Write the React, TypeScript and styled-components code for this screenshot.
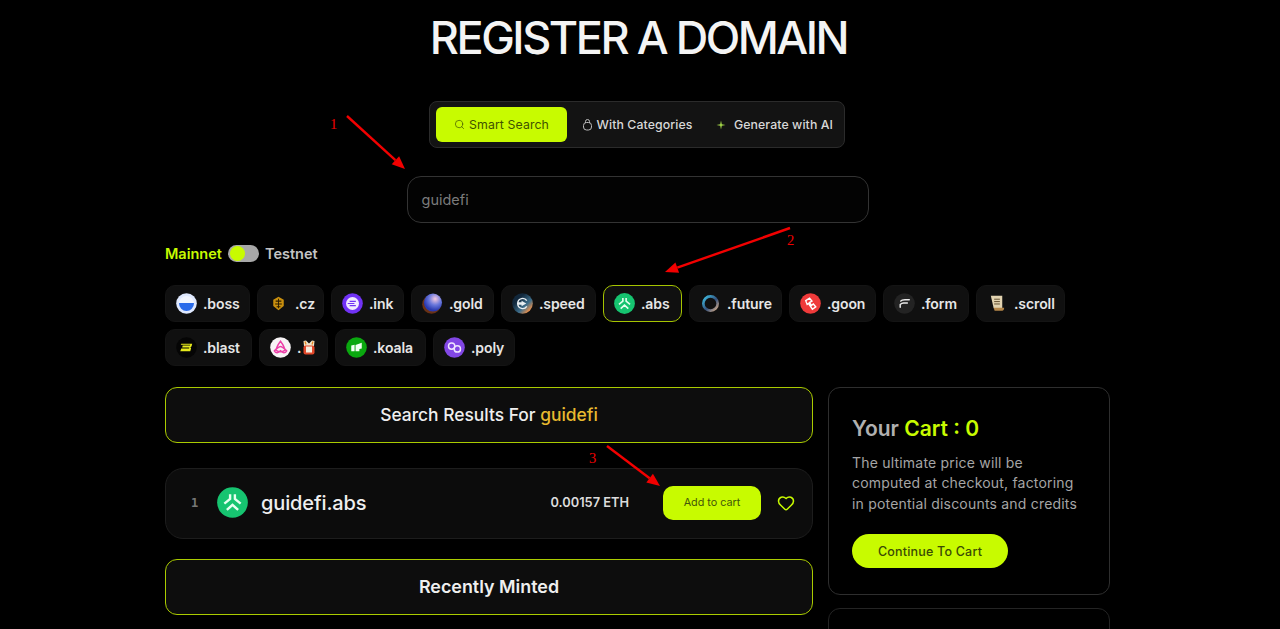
import React from "react";
import styled, { createGlobalStyle } from "styled-components";
import { Search, Heart } from "lucide-react";

const lime = "#c8fb00";
const font = `"Inter", "Noto Sans", "Liberation Sans", sans-serif`;

const Global = createGlobalStyle`
  html, body { margin: 0; padding: 0; background: #000; overflow: hidden; height: 629px; }
  body { font-family: ${font}; color: #eee; }
  * { box-sizing: border-box; }
`;

const Viewport = styled.div`
  position: relative;
  height: 629px;
  overflow: hidden;
  background: #000;
  padding-left: 165px;
`;
const Column = styled.main`
  width: 945px;
  display: flex;
  flex-direction: column;
  align-items: center;
`;
const Title = styled.h1`
  margin: 15px 0 40px 2px;
  font-size: 45px;
  line-height: 46px;
  font-weight: 500;
  letter-spacing: -2.45px;
  color: #f4f4f4;
  white-space: nowrap;
`;
const TabBar = styled.div`
  width: 416px;
  height: 47px;
  margin-right: 1px;
  display: flex;
  align-items: center;
  padding: 0 6px;
  background: #131313;
  border: 1px solid #2b2b2b;
  border-radius: 8px;
`;
const Tab = styled.div<{ $active?: boolean; $w: number }>`
  width: ${(p) => p.$w}px;
  height: 35px;
  flex: none;
  display: flex;
  align-items: center;
  justify-content: center;
  gap: 4px;
  font-size: 12.3px;
  font-weight: ${(p) => (p.$active ? 400 : 500)};
  letter-spacing: 0.1px;
  white-space: nowrap;
  border-radius: 6px;
  color: ${(p) => (p.$active ? "#3f5200" : "#d8d8d8")};
  background: ${(p) => (p.$active ? lime : "transparent")};
`;
const SearchBox = styled.div`
  width: 462px;
  height: 47px;
  margin-top: 28px;
  display: flex;
  align-items: center;
  padding-left: 14px;
  background: #030303;
  border: 1px solid #333;
  border-radius: 14px;
  font-size: 14.5px;
  color: #7b7b7b;
`;
const NetRow = styled.div`
  align-self: flex-start;
  height: 20px;
  margin-top: 21px;
  padding-bottom: 1px;
  display: flex;
  align-items: center;
  gap: 6px;
  font-size: 14.5px;
  font-weight: 600;
`;
const NetLabel = styled.span<{ $on?: boolean }>`
  color: ${(p) => (p.$on ? lime : "#c4c4c4")};
`;
const Toggle = styled.span`
  width: 31px;
  height: 17px;
  border-radius: 9px;
  background: #a8a8a8;
  display: flex;
  align-items: center;
  padding-left: 2px;
  &::before {
    content: "";
    width: 15px;
    height: 15px;
    border-radius: 50%;
    background: ${lime};
  }
`;
const ChipWrap = styled.div`
  align-self: stretch;
  margin-top: 21px;
  display: flex;
  flex-direction: column;
  gap: 7px;
`;
const ChipRow = styled.div`
  display: flex;
  gap: 7px;
`;
const Chip = styled.div<{ $w: number; $selected?: boolean }>`
  width: ${(p) => p.$w}px;
  height: 37px;
  flex: none;
  display: flex;
  align-items: center;
  gap: 6px;
  padding: 0 0 1px 10px;
  background: #101010;
  border: 1px solid ${(p) => (p.$selected ? "#a5c400" : "#141414")};
  border-radius: 10px;
  font-size: 14px;
  font-weight: 600;
  letter-spacing: -0.1px;
  color: #e6e6e6;
  white-space: nowrap;
`;
const Content = styled.div`
  align-self: stretch;
  margin-top: 21px;
  display: grid;
  grid-template-columns: 648px 282px;
  column-gap: 15px;
  align-items: start;
`;
const Left = styled.div`
  display: flex;
  flex-direction: column;
`;
const Right = styled.div`
  display: flex;
  flex-direction: column;
  gap: 13px;
`;
const Banner = styled.div<{ $top?: number; $bold?: boolean }>`
  height: 56px;
  margin-top: ${(p) => p.$top ?? 0}px;
  display: flex;
  align-items: center;
  justify-content: center;
  padding-bottom: 1px;
  background: #0d0d0d;
  border: 1px solid #aacb00;
  border-radius: 12px;
  font-size: ${(p) => (p.$bold ? 17.9 : 17.4)}px;
  font-weight: ${(p) => (p.$bold ? 600 : 500)};
  color: #efefef;
  white-space: pre;
`;
const Gold = styled.span`
  color: #e7b92f;
`;
const ResultCard = styled.div`
  height: 71px;
  margin-top: 25px;
  display: flex;
  align-items: center;
  padding: 0 17px 2px 25px;
  background: #0c0c0c;
  border: 1px solid #1d1d1d;
  border-radius: 18px;
`;
const Rank = styled.span`
  width: 26px;
  font-family: "DejaVu Sans Mono", monospace;
  font-size: 12px;
  font-weight: 700;
  color: #777;
`;
const DomainName = styled.span`
  margin-left: 13px;
  flex: 1;
  font-size: 20px;
  font-weight: 500;
  letter-spacing: -0.12px;
  color: #efefef;
`;
const Price = styled.span`
  font-size: 12.8px;
  font-weight: 600;
  color: #dcdcdc;
`;
const AddBtn = styled.button`
  width: 98px;
  height: 34px;
  margin-left: 34px;
  border: 0;
  border-radius: 10px;
  background: ${lime};
  font-family: ${font};
  font-size: 10.8px;
  color: #43560a;
`;
const Fav = styled.span`
  margin-left: 16px;
  display: flex;
  color: ${lime};
`;
const CartCard = styled.aside`
  height: 208px;
  padding: 27px 23px 0;
  background: #000;
  border: 1px solid #2e2e2e;
  border-radius: 12px;
`;
const CartTitle = styled.h2`
  margin: 0;
  font-size: 21px;
  line-height: 27px;
  font-weight: 600;
  color: #b0b0b0;
`;
const Lime = styled.span`
  color: ${lime};
`;
const CartText = styled.p`
  margin: 11px 0 0;
  font-size: 14px;
  line-height: 20.4px;
  letter-spacing: 0.2px;
  color: #a5a5a5;
  white-space: nowrap;
`;
const ContinueBtn = styled.button`
  width: 156px;
  height: 34px;
  margin-top: 20px;
  border: 0;
  border-radius: 17px;
  background: ${lime};
  font-family: ${font};
  font-size: 12.5px;
  font-weight: 500;
  letter-spacing: 0.2px;
  color: #3a4a05;
`;
const NextCard = styled.div`
  height: 80px;
  border: 1px solid #242424;
  border-radius: 12px;
`;
const Overlay = styled.svg`
  position: absolute;
  inset: 0;
  width: 1280px;
  height: 629px;
  pointer-events: none;
`;
const Mark = styled.span<{ $x: number; $y: number }>`
  position: absolute;
  left: ${(p) => p.$x}px;
  top: ${(p) => p.$y}px;
  font-family: "Liberation Serif", serif;
  font-size: 14.5px;
  line-height: 15px;
  color: #f00000;
`;
const IconBox = styled.svg`
  width: 21px;
  height: 21px;
  flex: none;
`;

const I = ({ children }: { children: React.ReactNode }) => (
  <IconBox viewBox="0 0 22 22">{children}</IconBox>
);

const Boss = () => (
  <I>
    <defs>
      <linearGradient id="bossg" x1="0" y1="0" x2="0" y2="1">
        <stop offset="0.48" stopColor="#f2f6ff" />
        <stop offset="0.5" stopColor="#2a6bea" />
      </linearGradient>
    </defs>
    <circle cx="11" cy="11" r="10.8" fill="#dfe9ff" />
    <circle cx="11" cy="11" r="7.8" fill="url(#bossg)" />
  </I>
);
const Cz = () => (
  <I>
    <path d="M11 4l5.500 3v6.500L11 18l-5.500-4.500V7z" fill="#c98f0e" />
    <path d="M8 8.500h6M7.500 11.500h7M9 14.500h4" stroke="#2a1c00" strokeWidth="1.100" />
    <path d="M11 6v10" stroke="#2a1c00" strokeWidth="1" />
  </I>
);
const Ink = () => (
  <I>
    <circle cx="11" cy="11" r="10.800" fill="#7132f5" />
    <circle cx="11" cy="11" r="6.800" fill="#f1eaff" />
    <path d="M8 8.800h6.500M6 11h7M8 13.200h6.500" stroke="#7132f5" strokeWidth="1.300" />
  </I>
);
const GoldI = () => (
  <I>
    <defs>
      <radialGradient id="goldg" cx="0.62" cy="0.3" r="0.75">
        <stop offset="0" stopColor="#f5c9e0" />
        <stop offset="0.45" stopColor="#6a78dc" />
        <stop offset="0.85" stopColor="#2a3ab0" />
      </radialGradient>
    </defs>
    <circle cx="10" cy="12" r="9.800" fill="#6a3216" />
    <circle cx="11.500" cy="10" r="9.500" fill="url(#goldg)" />
  </I>
);
const SpeedI = () => (
  <I>
    <defs>
      <linearGradient id="speedg" x1="0" y1="0" x2="1" y2="1">
        <stop offset="0.3" stopColor="#12283c" />
        <stop offset="0.62" stopColor="#3d6d8a" />
        <stop offset="0.85" stopColor="#f0914a" />
      </linearGradient>
    </defs>
    <circle cx="11" cy="11" r="10.800" fill="url(#speedg)" />
    <path d="M15.500 8A5.200 5.200 0 0 0 6 10.500h5M15.500 14A5.200 5.200 0 0 1 6 11.500h5" stroke="#e8eef2" strokeWidth="1.500" fill="none" />
    <path d="M10 8l5 3-5 3z" fill="#e8eef2" />
  </I>
);
const AbsI = ({ size = 21 }: { size?: number }) => (
  <svg width={size} height={size} viewBox="0 0 22 22" style={{ flex: "none" }}>
    <circle cx="11" cy="11" r="10.900" fill="#16c470" />
    <path
      d="M9.300 5.200v3.300L5.200 11.800M12.700 5.200v3.300l4.100 3.300M7 16.300l4-3.600 4 3.600"
      stroke="#e6fff0"
      strokeWidth="1.700"
      fill="none"
    />
  </svg>
);
const Future = () => (
  <I>
    <defs>
      <linearGradient id="futg" x1="0" y1="0" x2="1" y2="1">
        <stop offset="0" stopColor="#3fc3e8" />
        <stop offset="0.55" stopColor="#32507c" />
        <stop offset="1" stopColor="#e0b38a" />
      </linearGradient>
    </defs>
    <circle cx="11" cy="11" r="7.500" fill="none" stroke="url(#futg)" strokeWidth="2.800" />
  </I>
);
const Goon = () => (
  <I>
    <circle cx="11" cy="11" r="10.800" fill="#ef3a3a" />
    <path d="M6 8l4-2.500 2.500 3L10 10l2 3 2-1.500 2.500 3-3.500 2.500L9 11 7.500 12z" fill="none" stroke="#fff" strokeWidth="1.500" />
  </I>
);
const FormI = () => (
  <I>
    <circle cx="11" cy="11" r="10.800" fill="#232323" />
    <path d="M7 8.500c1-1.500 3-1.500 4.500-1.500H16M6.500 12c1-1 2-1.500 3.500-1.500h4M6.500 12v3" stroke="#ececec" strokeWidth="1.500" fill="none" strokeLinecap="round" />
  </I>
);
const Scroll = () => (
  <I>
    <path d="M4 3h12v13H7z" fill="#e2d3b0" />
    <path d="M7.500 6.500h6M7.500 9h6M7.500 11.500h6" stroke="#5c4a2c" strokeWidth="1" />
    <path d="M7 15.500h11c0 2-1 3-2 3H8z" fill="#b5874a" />
  </I>
);
const Blast = () => (
  <I>
    <circle cx="11" cy="11" r="10.800" fill="#050505" />
    <path
      d="M5.500 7H17l-.8 3-1.200 1 .8.800-.9 3.200H4.500l1-3h8.200l.3-1H6.500l.5-2h7.600l.3-1H5z"
      fill="#e6ea1c"
    />
  </I>
);
const Tri = () => (
  <I>
    <circle cx="11" cy="11" r="10.800" fill="#f7f3f5" />
    <path d="M11 4.500c-3 4-4.500 7-4.500 9.500 3 2 6 2 9 0 0-2.500-1.500-5.500-4.500-9.500zM4.500 14.500c2.500-3 6-4.500 6.500-4.500s4 1.500 6.500 4.500c-1.500 2.500-4 2.800-6.500 0-2.500 2.800-5 2.500-6.500 0z" fill="none" stroke="#ec3fa8" strokeWidth="1.500" />
  </I>
);
const Drum = () => (
  <svg width="12" height="15" viewBox="0 0 12 15" style={{ flex: "none", marginLeft: -4 }}>
    <path d="M0.500 1L3 0.500 6 3.500 9 0.500 11.500 1 11 6H1z" fill="#f0e4cc" />
    <path d="M2 1.500l1 3M10 1.500l-1 3" stroke="#e8861e" strokeWidth="1.300" />
    <rect x="0.500" y="5.500" width="11" height="9" rx="2" fill="#e2482a" />
    <rect x="3" y="6.500" width="6" height="6" fill="#f6efe0" />
  </svg>
);
const Koala = () => (
  <I>
    <circle cx="11" cy="11" r="10.800" fill="#0aa80f" />
    <path d="M5.500 9l3.500-1v7H5.500zM10 8.500L16.500 6v6l-2.500.5V15h-4z" fill="#f3fff3" />
  </I>
);
const Poly = () => (
  <I>
    <circle cx="11" cy="11" r="10.800" fill="#8247e5" />
    <circle cx="8" cy="9.500" r="3.300" fill="none" stroke="#efe6ff" strokeWidth="1.500" />
    <circle cx="14" cy="12.500" r="3.300" fill="none" stroke="#efe6ff" strokeWidth="1.500" />
  </I>
);

const Arrow = ({ x1, y1, x2, y2 }: { x1: number; y1: number; x2: number; y2: number }) => {
  const a = Math.atan2(y2 - y1, x2 - x1);
  const L = 13;
  const W = 5.5;
  const bx = x2 - L * Math.cos(a);
  const by = y2 - L * Math.sin(a);
  const nx = -Math.sin(a);
  const ny = Math.cos(a);
  return (
    <g>
      <line x1={x1} y1={y1} x2={bx} y2={by} stroke="#f20000" strokeWidth="2.400" />
      <polygon
        points={`${x2},${y2} ${bx + nx * W},${by + ny * W} ${bx - nx * W},${by - ny * W}`}
        fill="#f20000"
      />
    </g>
  );
};

const rowOne: [string, number, React.ReactNode, boolean?][] = [
  [".boss", 85, <Boss />],
  [".cz", 67, <Cz />],
  [".ink", 73, <Ink />],
  [".gold", 83, <GoldI />],
  [".speed", 95, <SpeedI />],
  [".abs", 79, <AbsI />, true],
  [".future", 93, <Future />],
  [".goon", 87, <Goon />],
  [".form", 86, <FormI />],
  [".scroll", 89, <Scroll />],
];
const rowTwo: [string, number, React.ReactNode][] = [
  [".blast", 87, <Blast />],
  [".", 69, <Tri />],
  [".koala", 91, <Koala />],
  [".poly", 82, <Poly />],
];

export default function App() {
  return (
    <Viewport>
      <Global />
      <Column>
        <Title>REGISTER A DOMAIN</Title>
        <TabBar>
          <Tab $active $w={131}>
            <Search size={11} strokeWidth={1.5} />
            Smart Search
          </Tab>
          <Tab $w={140}>
            <svg width="11" height="12" viewBox="0 0 11 12" fill="none" stroke="#bbb" strokeWidth="1">
              <rect x="1.500" y="3.500" width="8" height="7.500" rx="3" />
              <path d="M3.500 4V2.500a2 2 0 0 1 4 0V4" />
            </svg>
            With Categories
          </Tab>
          <Tab $w={134}>
            <svg width="12" height="12" viewBox="0 0 12 12" style={{ marginRight: 3 }}>
              <path d="M6 1.500l.8 3.700 3.700.8-3.700.8L6 10.500l-.8-3.700L1.500 6l3.700-.8z" fill="#a6d94a" />
            </svg>
            Generate with AI
          </Tab>
        </TabBar>
        <SearchBox>guidefi</SearchBox>
        <NetRow>
          <NetLabel $on>Mainnet</NetLabel>
          <Toggle />
          <NetLabel>Testnet</NetLabel>
        </NetRow>
        <ChipWrap>
          <ChipRow>
            {rowOne.map(([label, w, icon, selected]) => (
              <Chip key={label} $w={w} $selected={selected}>
                {icon}
                {label}
              </Chip>
            ))}
          </ChipRow>
          <ChipRow>
            {rowTwo.map(([label, w, icon]) => (
              <Chip key={label} $w={w}>
                {icon}
                {label}
                {label === "." && <Drum />}
              </Chip>
            ))}
          </ChipRow>
        </ChipWrap>
        <Content>
          <Left>
            <Banner>
              Search Results For <Gold>guidefi</Gold>
            </Banner>
            <ResultCard>
              <Rank>1</Rank>
              <AbsI size={31} />
              <DomainName>guidefi.abs</DomainName>
              <Price>0.00157 ETH</Price>
              <AddBtn>Add to cart</AddBtn>
              <Fav>
                <Heart size={18} strokeWidth={2} />
              </Fav>
            </ResultCard>
            <Banner $top={20} $bold>
              Recently Minted
            </Banner>
          </Left>
          <Right>
            <CartCard>
              <CartTitle>
                Your <Lime>Cart : 0</Lime>
              </CartTitle>
              <CartText>
                The ultimate price will be
                <br />
                computed at checkout, factoring
                <br />
                in potential discounts and credits
              </CartText>
              <ContinueBtn>Continue To Cart</ContinueBtn>
            </CartCard>
            <NextCard />
          </Right>
        </Content>
      </Column>
      <Overlay viewBox="0 0 1280 629">
        <Arrow x1={347} y1={116} x2={405} y2={169} />
        <Arrow x1={790} y1={228} x2={665} y2={272} />
        <Arrow x1={607} y1={446} x2={660} y2={486} />
      </Overlay>
      <Mark $x={330} $y={117}>1</Mark>
      <Mark $x={787} $y={233}>2</Mark>
      <Mark $x={589} $y={451}>3</Mark>
    </Viewport>
  );
}
